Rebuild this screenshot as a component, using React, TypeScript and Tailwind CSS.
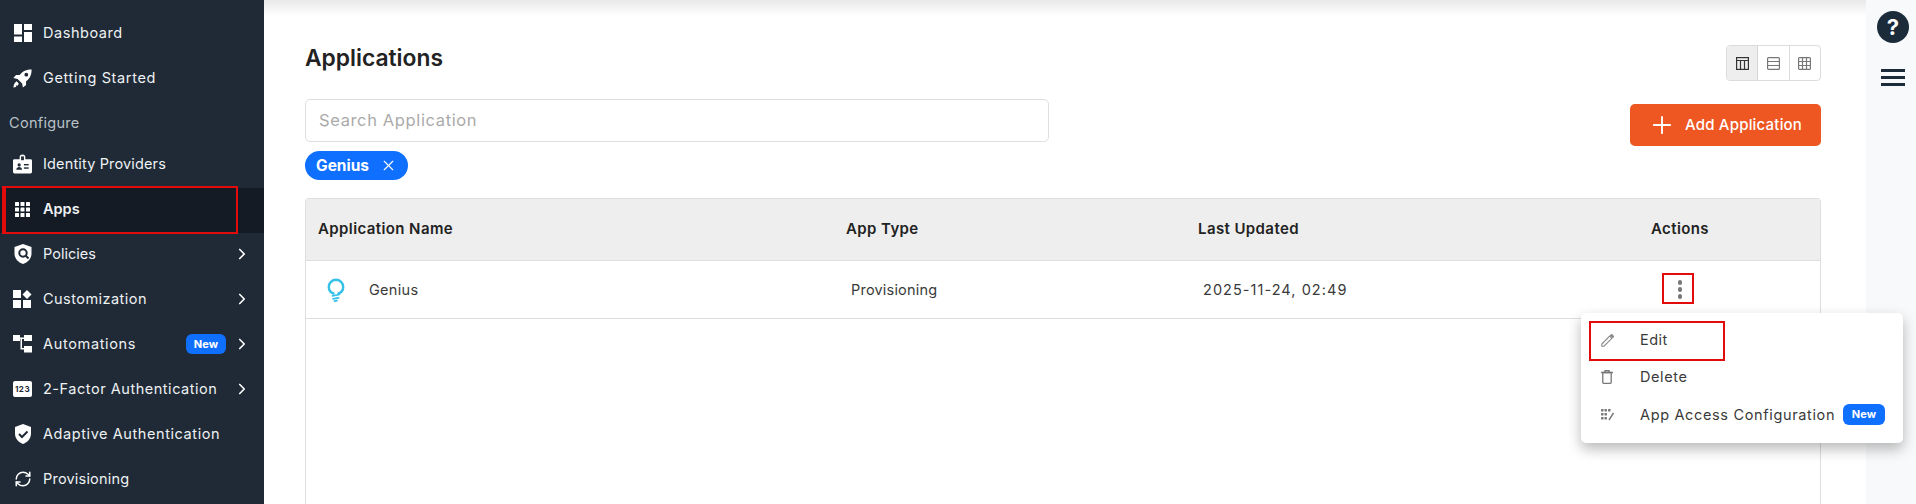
import React from 'react';
import { ChevronRight, Plus, X, RefreshCw } from 'lucide-react';

const font = { fontFamily: 'Inter, "Liberation Sans", sans-serif' };

function DashboardIcon() {
  return (
    <svg width="18" height="18" viewBox="0 0 18 18" fill="#fff">
      <rect x="0" y="0" width="8" height="10.5" />
      <rect x="10" y="0" width="8" height="6" />
      <rect x="0" y="12.5" width="8" height="5.5" />
      <rect x="10" y="8" width="8" height="10" />
    </svg>
  );
}

function RocketIcon() {
  return (
    <svg width="19" height="19" viewBox="0 0 24 24" fill="#fff">
      <path d="M23.500 .5c-6.500 0-11.500 2-15 7H3.800L.5 11.500l5.300 1 5.700 5.700 1 5.300 4-3.300v-4.700C21.500 12 23.500 7 23.500 .5zm-6.700 9.100a2.400 2.400 0 1 1 0-4.800 2.400 2.400 0 0 1 0 4.800z" />
      <path d="M4.800 15.500C2.300 16.500 1 19.500.5 23.500c1.500-.2 2.700-.6 3.700-1.100l-.7-1.900 2.100.6c.8-.7 1.400-1.500 1.700-2.400z" />
    </svg>
  );
}

function BadgeIcon() {
  return (
    <svg width="20" height="20" viewBox="0 0 20 20" fill="#fff">
      <path d="M1.500 5h5.500V3a3 3 0 0 1 6 0v2h5.500A1.500 1.500 0 0 1 20 6.500v12a1.500 1.500 0 0 1-1.500 1.500h-17A1.500 1.500 0 0 1 0 18.500v-12A1.500 1.500 0 0 1 1.500 5z" />
      <rect x="8.500" y="2" width="3" height="4" fill="#1f2a36" />
      <circle cx="6.500" cy="11" r="1.700" fill="#1f2a36" />
      <path d="M3.500 16c0-1.800 1.400-2.800 3-2.800s3 1 3 2.800z" fill="#1f2a36" />
      <rect x="11.500" y="10" width="5" height="1.500" fill="#1f2a36" />
      <rect x="11.500" y="13.500" width="5" height="1.500" fill="#1f2a36" />
    </svg>
  );
}

function GridIcon() {
  return (
    <svg width="15" height="15" viewBox="0 0 15 15" fill="#fff">
      {[0, 5.500, 11].map((y) =>
        [0, 5.500, 11].map((x) => <rect key={`${x}-${y}`} x={x} y={y} width="4" height="4" rx="0.500" />)
      )}
    </svg>
  );
}

function PolicyIcon() {
  return (
    <svg width="18" height="20" viewBox="0 0 18 20" fill="#fff">
      <path d="M9 0l8.500 3v6.500c0 5-3.500 8.800-8.500 10.500C4 18.300.5 14.500.5 9.500V3z" />
      <circle cx="9" cy="9" r="3.700" fill="none" stroke="#1f2a36" strokeWidth="2" />
      <path d="M11.500 11.500l3 3" stroke="#1f2a36" strokeWidth="2" />
    </svg>
  );
}

function CustomizationIcon() {
  return (
    <svg width="19" height="18" viewBox="0 0 19 18" fill="#fff">
      <rect x="0" y="0" width="8" height="8" />
      <rect x="0" y="10" width="8" height="8" />
      <rect x="10" y="10" width="8" height="8" />
      <path d="M14 0l4.500 4.500L14 9 9.500 4.500z" />
    </svg>
  );
}

function AutomationIcon() {
  return (
    <svg width="19" height="18" viewBox="0 0 19 18" fill="#fff">
      <rect x="0" y="0" width="7" height="6" />
      <rect x="11" y="0" width="8" height="6" />
      <rect x="11" y="11" width="8" height="6.500" />
      <path d="M7 2.500h4v1.500H9v9h2v1.500H7.500V4H7z" />
    </svg>
  );
}

function NumbersIcon() {
  return (
    <div className="flex h-[16px] w-[19px] shrink-0 items-center justify-center rounded-[2px] bg-white text-[8px] font-bold leading-none tracking-[0.5px] text-[#1f2a36]">
      123
    </div>
  );
}

function ShieldCheckIcon() {
  return (
    <svg width="18" height="20" viewBox="0 0 18 20" fill="#fff">
      <path d="M9 0l8 3v6.500c0 5-3.300 8.800-8 10.500C4.300 18.300 1 14.500 1 9.500V3z" />
      <path d="M5 10l3 3 5.500-5.500" fill="none" stroke="#1f2a36" strokeWidth="2" />
    </svg>
  );
}

function NavItem({ icon, label, chevron, badge, active, labelClass = '' }: { icon: React.ReactNode; label: string; chevron?: boolean; badge?: boolean; active?: boolean; labelClass?: string }) {
  return (
    <div className={`flex h-[45px] items-center pb-[3px] pl-[13px] pr-[13px] ${active ? 'bg-[#141b24]' : ''}`}>
      <div className="mr-[11px] flex w-[19px] shrink-0 items-center justify-center">{icon}</div>
      <span className={`text-[14.500px] text-[#eef1f3] ${active ? 'font-semibold' : 'font-normal'} ${labelClass}`}>{label}</span>
      {badge && (
        <span className="ml-auto mr-[7px] rounded-[6px] bg-[#0f6fff] px-[8px] py-[3px] text-[11px] font-bold leading-[14px] text-white">
          New
        </span>
      )}
      {chevron && <ChevronRight size={18} strokeWidth={2.200} className={`${badge ? '' : 'ml-auto'} text-white`} />}
    </div>
  );
}

function Sidebar() {
  return (
    <aside className="flex h-full w-[264px] shrink-0 flex-col overflow-hidden bg-[#1f2a36] pt-[12px]">
      <NavItem icon={<DashboardIcon />} label="Dashboard" labelClass="tracking-[0.55px]" />
      <NavItem icon={<RocketIcon />} label="Getting Started" labelClass="tracking-[0.65px]" />
      <div className="flex h-[41px] items-center pl-[9px] text-[14.500px] tracking-[0.3px] text-[#b9c1c7]">Configure</div>
      <NavItem icon={<BadgeIcon />} label="Identity Providers" labelClass="tracking-[0.15px]" />
      <div className="relative">
        <NavItem icon={<GridIcon />} label="Apps" active />
        <div className="absolute -top-[2px] left-[2px] h-[48px] w-[236px] border-2 border-l-[4px] border-[#e30c0c]" />
      </div>
      <NavItem icon={<PolicyIcon />} label="Policies" chevron />
      <NavItem icon={<CustomizationIcon />} label="Customization" chevron labelClass="tracking-[0.46px]" />
      <NavItem icon={<AutomationIcon />} label="Automations" chevron badge labelClass="tracking-[0.66px]" />
      <NavItem icon={<NumbersIcon />} label="2-Factor Authentication" chevron labelClass="tracking-[0.53px]" />
      <NavItem icon={<ShieldCheckIcon />} label="Adaptive Authentication" labelClass="tracking-[0.58px]" />
      <NavItem icon={<RefreshCw size={18} color="#fff" strokeWidth={2} />} label="Provisioning" labelClass="tracking-[0.2px]" />
    </aside>
  );
}

function ViewToggle() {
  return (
    <div className="flex h-[36px] w-[95px] overflow-hidden rounded-[4px] border border-[#dcdcdc]">
      <div className="flex flex-1 items-center justify-center border-r border-[#d5d5d5] bg-[#eeeeee]">
        <svg width="13" height="13" viewBox="0 0 13 13" fill="none" stroke="#333" strokeWidth="1.200">
          <rect x="0.600" y="0.600" width="11.800" height="11.800" />
          <path d="M0.600 3.500h11.800M4.500 3.500v9M8.500 3.500v9" />
        </svg>
      </div>
      <div className="flex flex-1 items-center justify-center border-r border-[#dcdcdc]">
        <svg width="13" height="13" viewBox="0 0 13 13" fill="none" stroke="#777" strokeWidth="1.200">
          <rect x="0.600" y="0.600" width="11.800" height="11.800" rx="1" />
          <path d="M0.600 4.500h11.800M0.600 8.500h11.800" />
        </svg>
      </div>
      <div className="flex flex-1 items-center justify-center">
        <svg width="13" height="13" viewBox="0 0 13 13" fill="none" stroke="#777" strokeWidth="1.200">
          <rect x="0.600" y="0.600" width="11.800" height="11.800" rx="1" />
          <path d="M0.600 4.500h11.800M0.600 8.500h11.800M4.500 0.600v11.800M8.500 0.600v11.800" />
        </svg>
      </div>
    </div>
  );
}

function GeniusLogo() {
  return (
    <svg width="18" height="24" viewBox="0 0 18 24" fill="none" stroke="#35c1e8" strokeWidth="2.400" strokeLinecap="round">
      <path d="M6.500 15.500C3.500 14.500 1.800 12 1.800 9a7.200 7.200 0 0 1 14.400 0c0 3-1.700 5.500-4.700 6.500" />
      <path d="M5.500 17.800l7-1.300M6 20.800l5.500-1M7.500 23.200l2.500-.6" strokeWidth="1.700" />
    </svg>
  );
}

function PencilIcon() {
  return (
    <svg width="13" height="13" viewBox="0 0 13 13" fill="none" stroke="#888" strokeWidth="1.100">
      <path d="M.8 12.200V10L8.700 2.100l2.200 2.200L3 12.200z" />
      <path d="M9.600 1.200l.6-.5c.2-.2.500-.2.700 0l1.400 1.400c.2.200.2.500 0 .7l-.5.600z" fill="#888" />
    </svg>
  );
}

function TrashIcon() {
  return (
    <svg width="12" height="14" viewBox="0 0 12 14" fill="none" stroke="#777" strokeWidth="1.300">
      <path d="M0 2.500h12M4 2.500V.7h4v1.800" />
      <rect x="1.800" y="2.500" width="8.400" height="10.800" rx="0.800" />
    </svg>
  );
}

function AccessIcon() {
  return (
    <svg width="13" height="12" viewBox="0 0 13 12" fill="#777">
      {[0, 4, 8].map((y) =>
        [0, 3.500, 7].map((x) => (x === 7 && y > 0 ? null : <rect key={`${x}-${y}`} x={x} y={y} width="2.500" height="2.500" rx="0.400" />))
      )}
      <path d="M12.500 4L8 11" stroke="#777" strokeWidth="1.400" />
    </svg>
  );
}

function ActionMenu() {
  return (
    <div className="absolute left-[1581px] top-[313px] z-10 h-[130px] w-[322px] rounded-[5px] bg-white pt-[8px] shadow-[0_6px_14px_rgba(0,0,0,0.28)]">
      <div className="relative flex h-[38px] items-center pl-[20px] text-[14.500px] tracking-[0.5px] text-[#3a3a3a]">
        <div className="w-[39px] shrink-0"><PencilIcon /></div>
        Edit
        <div className="absolute left-[8px] top-[0px] h-[40px] w-[136px] border-2 border-[#e30c0c]" />
      </div>
      <div className="flex h-[36px] items-center pl-[20px] text-[14.500px] tracking-[0.6px] text-[#3a3a3a]">
        <div className="w-[39px] shrink-0"><TrashIcon /></div>
        Delete
      </div>
      <div className="flex h-[39px] items-center pl-[20px] text-[14.500px] tracking-[0.65px] text-[#3a3a3a]">
        <div className="w-[39px] shrink-0"><AccessIcon /></div>
        App Access Configuration
        <span className="ml-auto mr-[18px] rounded-[6px] bg-[#0f6fff] px-[9px] py-[3px] text-[11px] font-bold leading-[15px] tracking-normal text-white">New</span>
      </div>
    </div>
  );
}

function ApplicationsTable() {
  return (
    <div className="mt-[18px] flex-1 rounded-t-[4px] border border-b-0 border-[#dedede]">
      <div className="flex h-[62px] items-center border-b border-[#dedede] bg-[#eeeeee] text-[15px] font-semibold tracking-[0.4px] text-[#222]">
        <div className="w-[540px] pl-[12px]">Application Name</div>
        <div className="w-[352px]">App Type</div>
        <div className="w-[420px]">Last Updated</div>
        <div className="w-[124px] text-center">Actions</div>
      </div>
      <div className="flex h-[58px] items-center border-b border-[#dedede] text-[14.500px] text-[#3a3a3a]">
        <div className="flex w-[545px] items-center pl-[21px]">
          <GeniusLogo />
          <span className="ml-[24px] tracking-[0.3px]">Genius</span>
        </div>
        <div className="w-[352px] tracking-[0.2px]">Provisioning</div>
        <div className="w-[415px] tracking-[1.050px]">2025-11-24, 02:49</div>
        <div className="relative flex w-[124px] justify-center">
          <div className="flex flex-col gap-[2.500px]">
            <span className="h-[4.500px] w-[4.500px] rounded-full bg-[#777]" />
            <span className="h-[4.500px] w-[4.500px] rounded-full bg-[#777]" />
            <span className="h-[4.500px] w-[4.500px] rounded-full bg-[#777]" />
          </div>
          <div className="absolute left-[44px] top-[-7px] h-[31px] w-[32px] border-2 border-[#e30c0c]" />
        </div>
      </div>
    </div>
  );
}

function RightRail() {
  return (
    <div className="flex w-[50px] shrink-0 flex-col items-center bg-[#f8f9fa] pt-[11px]">
      <div className="ml-[4px] flex h-[32px] w-[32px] items-center justify-center rounded-full bg-[#1c2b39] text-[22px] font-bold text-white">?</div>
      <div className="ml-[4px] mt-[26px] flex w-[24px] flex-col gap-[4px]">
        <span className="h-[3px] bg-[#1c2b39]" />
        <span className="h-[3px] bg-[#1c2b39]" />
        <span className="h-[3px] bg-[#1c2b39]" />
      </div>
    </div>
  );
}

export default function App() {
  return (
    <div className="relative flex h-[504px] w-[1916px] overflow-hidden bg-white" style={font}>
      <Sidebar />
      <main className="relative flex min-w-0 flex-1 flex-col pl-[41px] pr-[45px] pt-[45px]">
        <div className="absolute inset-x-0 top-0 h-[16px] bg-gradient-to-b from-[#e9e9e9] to-white" />
        <div className="flex items-start justify-between">
          <h1 className="-mt-[1px] text-[22.800px] font-semibold leading-[28px] text-[#222]">Applications</h1>
          <ViewToggle />
        </div>
        <div className="-mt-[8px] flex items-start justify-between">
          <div>
            <div className="mt-[26px] flex h-[43px] w-[744px] items-center rounded-[5px] border border-[#dedede] px-[13px] text-[16.500px] tracking-[0.63px] text-[#aaa]">
              Search Application
            </div>
            <div className="mt-[9px] flex h-[29px] w-[103px] items-center rounded-full bg-[#0f6fff] pl-[11px] text-[15.500px] font-bold text-white">
              Genius
              <X size={17} strokeWidth={1.600} className="ml-[11px]" />
            </div>
          </div>
          <div className="mt-[31px] flex h-[42px] w-[191px] items-center rounded-[5px] bg-[#ee5622] pl-[18px] text-[15px] font-medium tracking-[0.2px] text-white">
            <Plus size={28} strokeWidth={1.600} />
            <span className="ml-[9px]">Add Application</span>
          </div>
        </div>
        <ApplicationsTable />
      </main>
      <RightRail />
      <ActionMenu />
    </div>
  );
}
